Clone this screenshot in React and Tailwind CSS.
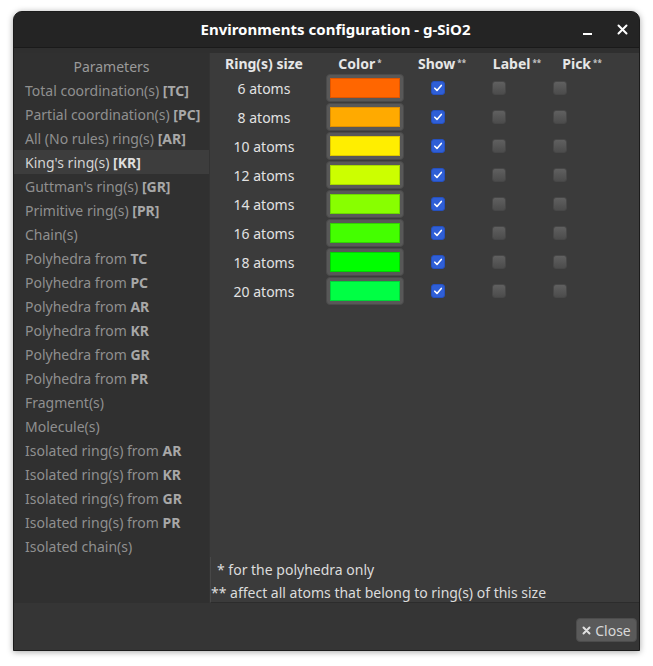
import React from 'react';

const FONT = { fontFamily: '"Noto Sans", "Open Sans", sans-serif' };

const PARAMS = [
  ['Total coordination(s) ', '[TC]'],
  ['Partial coordination(s) ', '[PC]'],
  ['All (No rules) ring(s) ', '[AR]'],
  ["King's ring(s) ", '[KR]'],
  ["Guttman's ring(s) ", '[GR]'],
  ['Primitive ring(s) ', '[PR]'],
  ['Chain(s)', ''],
  ['Polyhedra from ', 'TC'],
  ['Polyhedra from ', 'PC'],
  ['Polyhedra from ', 'AR'],
  ['Polyhedra from ', 'KR'],
  ['Polyhedra from ', 'GR'],
  ['Polyhedra from ', 'PR'],
  ['Fragment(s)', ''],
  ['Molecule(s)', ''],
  ['Isolated ring(s) from ', 'AR'],
  ['Isolated ring(s) from ', 'KR'],
  ['Isolated ring(s) from ', 'GR'],
  ['Isolated ring(s) from ', 'PR'],
  ['Isolated chain(s)', ''],
];

const RINGS = [
  { n: 6, c: '#ff6600', b: '#e05500' },
  { n: 8, c: '#ffaa00', b: '#e09000' },
  { n: 10, c: '#ffee00', b: '#e0c800' },
  { n: 12, c: '#ccff00', b: '#a8d800' },
  { n: 14, c: '#88ff00', b: '#6cd800' },
  { n: 16, c: '#44ff00', b: '#30d400' },
  { n: 18, c: '#00ff00', b: '#00d400' },
  { n: 20, c: '#00ff44', b: '#00d438' },
];

function Check({ on }) {
  if (on) {
    return (
      <div className="w-[14px] h-[14px] rounded-[3px] bg-[#2f5fd6] border border-[#2550c0] flex items-center justify-center">
        <svg width="10" height="10" viewBox="0 0 10 10">
          <path d="M1.8 5.2 L4 7.4 L8.3 2.4" fill="none" stroke="#fff" strokeWidth="1.6" strokeLinecap="round" strokeLinejoin="round" />
        </svg>
      </div>
    );
  }
  return <div className="w-[14px] h-[14px] rounded-[3px] bg-gradient-to-b from-[#606060] to-[#4c4c4c] border border-[#474747]" />;
}

function Sup({ children }) {
  return <sup className="text-[8px] font-bold ml-[2px] relative -top-[3px] text-[#c8c8c8]">{children}</sup>;
}

export default function App() {
  return (
    <div className="min-h-screen bg-white pt-[11px] pl-[13px]" style={FONT}>
      <div className="w-[627px] h-[640px] flex flex-col rounded-t-[9px] border border-[#1b1b1b] shadow-[0_1px_6px_rgba(0,0,0,0.35)] overflow-hidden bg-[#2f2f2f]">
        {/* Title bar */}
        <div className="h-[36px] shrink-0 bg-[#242424] border-b border-[#1a1a1a] flex items-center relative">
          <div className="flex-1 text-center text-[15px] font-bold text-white pl-[18px]">Environments configuration - g-SiO2</div>
          <div className="absolute right-[11px] top-0 h-full flex items-center gap-[25px]">
            <div className="w-[9px] h-[2px] bg-white mt-[8px]" />
            <svg width="11" height="11" viewBox="0 0 11 11">
              <path d="M1.5 1.5 L9.5 9.5 M9.5 1.5 L1.5 9.5" stroke="#fff" strokeWidth="2" strokeLinecap="round" />
            </svg>
          </div>
        </div>

        {/* Body */}
        <div className="flex-1 flex pt-[5px] min-h-0">
          {/* Parameters list */}
          <div className="w-[195px] shrink-0 bg-[#303030] text-[14px] pt-[1px]">
            <div className="h-[24px] flex items-center justify-center text-[#9a9a9a]">Parameters</div>
            {PARAMS.map(([t, b], i) => {
              const sel = i === 3;
              return (
                <div key={i}
                  className={`h-[24px] flex items-center pl-[11px] whitespace-pre ${sel ? 'bg-[#3d3d3d] text-[#d4d4d4]' : 'text-[#8f8f8f]'}`}>
                  <span>
                    {t}{b && <span className={`font-bold ${sel ? 'text-[#dedede]' : 'text-[#a8a8a8]'}`}>{b}</span>}
                  </span>
                </div>
              );
            })}
          </div>

          {/* Ring table */}
          <div className="flex-1 flex flex-col bg-[#3b3b3b] border-l border-[#333] text-[14px] text-[#e2e2e2]">
            <div className="h-[21px] flex items-center font-bold text-[#e6e6e6] whitespace-nowrap">
              <div className="w-[108px] text-center">Ring(s) size</div>
              <div className="w-[84px] text-center">Color<Sup>*</Sup></div>
              <div className="w-[80px] text-center">Show<Sup>**</Sup></div>
              <div className="w-[70px] text-center">Label<Sup>**</Sup></div>
              <div className="w-[60px] text-center">Pick<Sup>**</Sup></div>
            </div>
            <div className="flex flex-col gap-[1px]">
              {RINGS.map(r => (
                <div key={r.n} className="h-[28px] flex items-center">
                  <div className="w-[108px] text-center">{r.n} atoms</div>
                  <div className="w-[94px] flex justify-center">
                    <div className="w-[78px] h-[28px] rounded-[4px] bg-[#585858] border border-[#4a4a4a] p-[3px]">
                      <div className="w-full h-full border" style={{ background: r.c, borderColor: r.b }} />
                    </div>
                  </div>
                  <div className="ml-[19px]"><Check on /></div>
                  <div className="ml-[47px]"><Check /></div>
                  <div className="ml-[47px]"><Check /></div>
                </div>
              ))}
            </div>
            <div className="flex-1" />
            <div className="h-[46px] border-l border-[#484848] border-b border-b-[#2c2c2c] flex flex-col text-[#dcdcdc]">
              <div className="h-[24px] flex items-center pl-[6px]">* for the polyhedra only</div>
              <div className="h-[21px] flex items-center pt-[2px]">** affect all atoms that belong to ring(s) of this size</div>
            </div>
          </div>
        </div>

        {/* Footer */}
        <div className="h-[47px] shrink-0 bg-[#353535] flex items-end justify-end pr-[2px] pb-[8px]">
          <button className="h-[24px] w-[61px] rounded-[4px] bg-[#5a5a5a] border border-[#4c4c4c] text-[#d8d8d8] text-[14px] flex items-center justify-center gap-[4px]">
            <svg width="9" height="9" viewBox="0 0 9 9">
              <path d="M1.5 1.5 L7.5 7.5 M7.5 1.5 L1.5 7.5" stroke="#e0e0e0" strokeWidth="2" strokeLinecap="round" />
            </svg>
            Close
          </button>
        </div>
      </div>
    </div>
  );
}
